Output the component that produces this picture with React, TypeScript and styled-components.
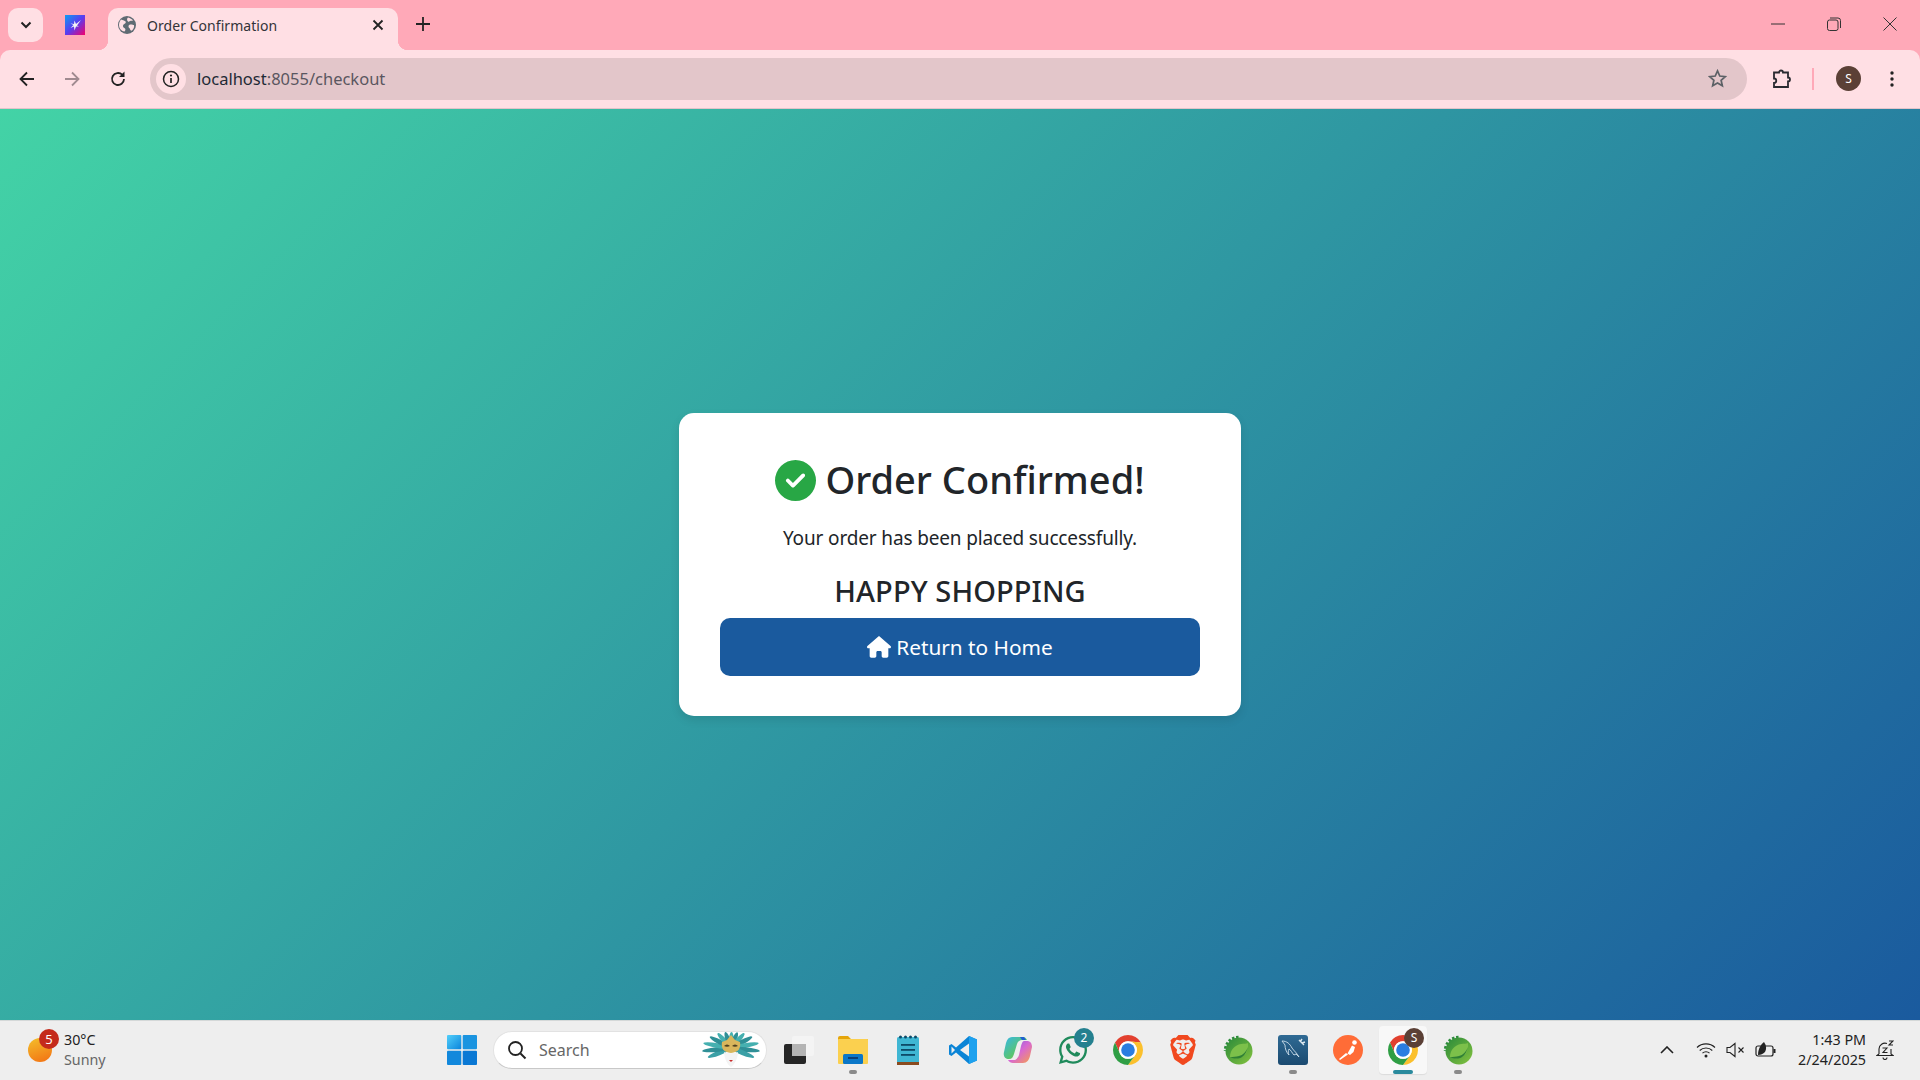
import React from 'react';
import styled, { createGlobalStyle } from 'styled-components';
import { FaWhatsapp } from 'react-icons/fa';
import { FaCircleCheck, FaHouse } from 'react-icons/fa6';
import { SiBrave } from 'react-icons/si';

const GlobalStyle = createGlobalStyle`
  * { box-sizing: border-box; }
  html, body { margin: 0; padding: 0; height: 100%; overflow: hidden; }
  body { font-family: "Noto Sans", "Liberation Sans", sans-serif; color: #212529; }
`;

const ChromeIcon = () => (
  <svg width="30" height="30" viewBox="2 2 44 44">
    <path d="M24 11L43.05 13A22 22 0 0 0 4.95 13L12.74 30.5A13 13 0 0 1 24 11z" fill="#e2402f" />
    <path d="M35.26 30.5L24 46A22 22 0 0 0 43.05 13L24 11A13 13 0 0 1 35.26 30.5z" fill="#fbc02d" />
    <path d="M12.74 30.5L4.95 13A22 22 0 0 0 24 46L35.26 30.5A13 13 0 0 1 12.74 30.5z" fill="#2f9e44" />
    <circle cx="24" cy="24" r="13" fill="#fff" />
    <circle cx="24" cy="24" r="10" fill="#2a7de1" />
  </svg>
);

// the two spring icons on the taskbar share one gradient id on purpose, both are identical
const SpringIcon = () => (
  <svg width="30" height="30" viewBox="0 0 30 30">
    <defs>
      <linearGradient id="springBody" x1="0" y1="0" x2="1" y2="1">
        <stop offset="0" stopColor="#2a8a3a" />
        <stop offset="0.55" stopColor="#5aa83c" />
        <stop offset="1" stopColor="#86c440" />
      </linearGradient>
    </defs>
    <path d="M15.5 2.5A13 13 0 0 0 2.5 16" fill="none" stroke="#2a8a3a" strokeWidth="3.4" strokeDasharray="2.4 1.6" />
    <circle cx="16" cy="16" r="13.5" fill="url(#springBody)" />
    <path d="M25 8c1 8-3 14-10 15-3 .5-6 0-8-1 0-7 5-12 11-13 3-.3 5 0 7-1z" fill="#7cc04a" />
    <path d="M7 22c4 2 9 2 12 0 3-2 5-6 6-10-2 5-5 8-9 9-3 .8-6 1-9 1z" fill="#2f7f35" />
  </svg>
);

const VscodeIcon = () => (
  <svg width="30" height="30" viewBox="0 0 30 30">
    <path d="M21 1l8 3.500v21L21 29 8 17.500l-4.500 3.500L1 19.500v-9L3.500 9 8 12.500z" fill="#0a84d6" />
    <path d="M21 1l8 3.500v21L21 29z" fill="#1ea1ee" />
    <path d="M21 8.500L12 15l9 6.500z" fill="#eeeeee" />
    <path d="M3.500 11.500L7 15l-3.500 3.500z" fill="#eeeeee" />
  </svg>
);

const ExplorerIcon = () => (
  <svg width="32" height="30" viewBox="0 0 32 30">
    <path d="M1 3a2 2 0 0 1 2-2h8l3 3h16a1 1 0 0 1 1 1v4H1z" fill="#e5a50a" />
    <rect x="1" y="4" width="30" height="25" rx="1" fill="#fbd04f" />
    <rect x="6" y="19" width="20" height="10" rx="1.5" fill="#0b77c8" />
    <rect x="11" y="22" width="10" height="2" fill="#0a3f78" />
  </svg>
);

const NotepadIcon = () => (
  <svg width="24" height="30" viewBox="0 0 24 30">
    <rect x="1" y="2" width="22" height="26" rx="1.5" fill="#3fb6d3" />
    <rect x="1" y="27" width="22" height="3" fill="#8a4b1f" />
    <g fill="#0d4a68">
      <circle cx="4.5" cy="2" r="1.5" />
      <circle cx="9.5" cy="2" r="1.5" />
      <circle cx="14.5" cy="2" r="1.5" />
      <circle cx="19.5" cy="2" r="1.5" />
      <rect x="5" y="9" width="14" height="1.8" />
      <rect x="5" y="14" width="14" height="1.8" />
      <rect x="5" y="19" width="14" height="1.8" />
    </g>
  </svg>
);

const TaskViewIcon = () => (
  <svg width="32" height="30" viewBox="0 0 32 30">
    <rect x="1" y="9" width="22" height="20" rx="2" fill="#262626" />
    <rect x="9" y="1" width="22" height="20" rx="2" fill="#f4f4f4" />
    <rect x="9" y="9" width="14" height="12" fill="#b4b4b4" />
  </svg>
);

const CopilotIcon = () => (
  <svg width="30" height="30" viewBox="0 0 30 30">
    <defs>
      <linearGradient id="copA" x1="0" y1="0" x2="1" y2="1">
        <stop offset="0" stopColor="#35b8e8" />
        <stop offset="0.6" stopColor="#5ac46e" />
        <stop offset="1" stopColor="#f7c531" />
      </linearGradient>
      <linearGradient id="copB" x1="0" y1="0" x2="1" y2="1">
        <stop offset="0" stopColor="#7a5ce8" />
        <stop offset="0.5" stopColor="#d868d0" />
        <stop offset="1" stopColor="#f7a04a" />
      </linearGradient>
    </defs>
    <path d="M9 2h11c2 0 3 1 4 3h-5c-2 0-4 1-5 4l-3 10c-1 3-2 5-5 5-4 0-6-3-5-7l2-9C4 4 6 2 9 2z" fill="url(#copA)" />
    <path d="M21 6h3c3 0 5 2 5 6l-2 9c-1 4-3 7-7 7H10c-2 0-4-1-5-3h6c2 0 4-2 5-5l2-9c.5-2 1.500-5 3-5z" fill="url(#copB)" />
    <path d="M17 2h4l2 3h-4z" fill="#1f5fd0" />
  </svg>
);

const MysqlIcon = () => (
  <svg width="30" height="30" viewBox="0 0 30 30">
    <defs>
      <linearGradient id="sqlBg" x1="0" y1="0" x2="0" y2="1">
        <stop offset="0" stopColor="#2f6a94" />
        <stop offset="1" stopColor="#1b4a70" />
      </linearGradient>
    </defs>
    <rect width="30" height="30" rx="3" fill="url(#sqlBg)" />
    <path d="M4 6c5 0 8 3 10 7 2 3 5 5 7 9l-3-3-2 1c-2-2-3-5-5-6-1 2-1 4 0 6-3-3-4-7-4-10-1-1-2-3-3-4z" fill="none" stroke="#cfe0ec" strokeWidth="0.9" />
    <path d="M21 5l5 5M24 4l-2 3M27 7l-3 1" stroke="#dce8f0" strokeWidth="1.4" fill="none" />
  </svg>
);

const PostmanIcon = () => (
  <svg width="30" height="30" viewBox="0 0 30 30">
    <circle cx="15" cy="15" r="15" fill="#ff6c37" />
    <circle cx="21.5" cy="7.5" r="2.3" fill="#fff" />
    <path d="M19 10.500l3 1.500-1.500 5-3.500 3-2.500-1.500zM13 18l2 1.500-8 5.500-1-1z" fill="#fff" />
  </svg>
);

const plumes = [
  { angle: -112, length: 25, fill: '#3aa0a6' },
  { angle: -96, length: 29, fill: '#2f8f96' },
  { angle: -80, length: 28, fill: '#45b0b0' },
  { angle: -62, length: 24, fill: '#2f8f96' },
  { angle: -42, length: 20, fill: '#45b0b0' },
  { angle: -20, length: 17, fill: '#2f8f96' },
  { angle: 2, length: 16, fill: '#45b0b0' },
  { angle: 22, length: 17, fill: '#2f8f96' },
  { angle: 42, length: 20, fill: '#45b0b0' },
  { angle: 62, length: 24, fill: '#2f8f96' },
  { angle: 80, length: 28, fill: '#45b0b0' },
  { angle: 96, length: 29, fill: '#2f8f96' },
  { angle: 112, length: 25, fill: '#3aa0a6' },
];

const MaskIcon = () => (
  <svg width="60" height="38" viewBox="0 0 60 38">
    {plumes.map((p) => (
      <ellipse
        key={p.angle}
        cx="30"
        cy={17 - p.length / 2}
        rx="2.4"
        ry={p.length / 2}
        fill={p.fill}
        transform={`rotate(${p.angle} 30 17)`}
      />
    ))}
    <path d="M21 11l5-2 4-5 4 5 5 2c1 6-1 10-9 11-8-1-10-5-9-11z" fill="#d9b65c" />
    <path d="M23 15c2-2 4-2 6 0-2 1-4 1-6 0zM31 15c2-2 4-2 6 0-2 1-4 1-6 0z" fill="#4e4020" />
    <path d="M23 21c3 1.500 11 1.500 14 0-.5 7-3 12-7 15-4-3-6.500-8-7-15z" fill="#f4f4f4" />
    <path d="M28 29h4l-2 2z" fill="#c92a2a" />
  </svg>
);

const GlobeIcon = () => (
  <svg width="18" height="18" viewBox="0 0 18 18">
    <circle cx="9" cy="9" r="9" fill="#5f6b73" />
    <path d="M3 3.500c2 .5 3 1 4 1.500s1 2 0 2.500-2 1-2 2.500 1 1.500 2 2.500 0 2.500-.5 3C3 15 1 12 1 9c0-2 .8-4 2-5.500zM10 1.500c2 .5 4 1.500 5 3-1 .5-2 0-3 .5s-1 1-2 .5-1.500-3 0-4zM16 9c.5 2-.5 4-2 5.500-1 .5-2-.5-2-1.500s-1.500-1-1.500-2.500 1-2 2.500-2 2 .5 3 .5z" fill="#ffdfe4" />
  </svg>
);

const PinnedIcon = () => (
  <svg width="20" height="20" viewBox="0 0 20 20">
    <defs>
      <linearGradient id="pin" x1="0" y1="0" x2="1" y2="1">
        <stop offset="0" stopColor="#0d9df2" />
        <stop offset="0.5" stopColor="#5a3cf0" />
        <stop offset="1" stopColor="#f5006a" />
      </linearGradient>
    </defs>
    <rect width="20" height="20" fill="url(#pin)" />
    <path d="M11 9l5-4-4 5.500 2 1-3 0-1.500 4-.5-4-3.500 1.500 3-3-3-1.500 3.500.5.500-3.500z" fill="#f4f4f4" />
  </svg>
);

const Page = styled.div`
  width: 1920px;
  height: 1080px;
  display: flex;
  flex-direction: column;
  overflow: hidden;
  background: #ffa9b8;
`;

const TabStrip = styled.div`
  height: 50px;
  flex: none;
  display: flex;
  align-items: flex-end;
  padding: 0 2px 0 8px;
`;

const TabSearch = styled.button`
  width: 35px;
  height: 34px;
  margin-bottom: 8px;
  padding: 0;
  border: 0;
  border-radius: 10px;
  background: #ffdfe4;
  display: flex;
  align-items: center;
  justify-content: center;
`;

const PinnedTab = styled.div`
  width: 65px;
  height: 42px;
  display: flex;
  align-items: flex-start;
  justify-content: center;
  padding: 7px 2px 0 0;
`;

const ActiveTab = styled.div`
  position: relative;
  width: 290px;
  height: 42px;
  background: #ffdfe4;
  border-radius: 10px 10px 0 0;
  display: flex;
  align-items: center;
  padding: 0 14px 8px 10px;
  font-size: 14px;
  color: #333338;
  &::before,
  &::after {
    content: '';
    position: absolute;
    bottom: 0;
    width: 10px;
    height: 10px;
  }
  &::before {
    left: -10px;
    background: radial-gradient(circle at 0 0, transparent 10px, #ffdfe4 10.5px);
  }
  &::after {
    right: -10px;
    background: radial-gradient(circle at 100% 0, transparent 10px, #ffdfe4 10.5px);
  }
`;

const TabTitle = styled.span`
  flex: 1;
  margin-left: 11px;
  letter-spacing: 0.05px;
`;

const NewTab = styled.div`
  margin-left: 18px;
  height: 42px;
  padding-top: 6px;
`;

const WindowControls = styled.div`
  margin-left: auto;
  align-self: flex-start;
  display: flex;
`;

const WindowButton = styled.div`
  width: 56px;
  height: 48px;
  display: flex;
  align-items: center;
  justify-content: center;
`;

const Toolbar = styled.div`
  height: 59px;
  flex: none;
  background: #ffdfe4;
  border-radius: 10px 10px 0 0;
  border-bottom: 1px solid #e3c4ca;
  display: flex;
  align-items: center;
  padding-bottom: 1px;
`;

const NavButton = styled.div<{ $width: number }>`
  width: ${({ $width }) => $width}px;
  display: flex;
  justify-content: center;
  flex: none;
`;

const Omnibox = styled.div`
  flex: none;
  width: 1597px;
  margin-left: 5px;
  height: 42px;
  border-radius: 21px;
  background: #e3c6ca;
  display: flex;
  align-items: center;
  padding: 0 20px 0 6px;
  font-size: 16.5px;
`;

const InfoBadge = styled.div`
  width: 30px;
  height: 30px;
  border-radius: 50%;
  background: #ffdfe4;
  display: flex;
  align-items: center;
  justify-content: center;
`;

const Url = styled.span`
  flex: 1;
  margin-left: 11px;
  color: #5a5660;
`;

const UrlHost = styled.span`
  color: #1e2a35;
`;

const ExtensionButton = styled(NavButton)`
  margin-left: 15px;
`;

const Divider = styled.div`
  width: 2px;
  height: 22px;
  background: #ffa9b8;
  margin-left: 10px;
`;

const Avatar = styled.div`
  width: 25px;
  height: 25px;
  border-radius: 50%;
  background: #5b4036;
  color: #fff;
  font-size: 12px;
  display: flex;
  align-items: center;
  justify-content: center;
  margin: 0 14px 0 22px;
`;

const Content = styled.main`
  flex: 1;
  min-height: 0;
  background: linear-gradient(135deg, #43d3a6, #1a5a9e);
  display: flex;
  align-items: center;
  justify-content: center;
`;

const Card = styled.section`
  width: 562px;
  padding: 42px 41px 40px;
  background: #fff;
  border-radius: 15px;
  box-shadow: 0 4px 10px rgba(0, 0, 0, 0.1);
  text-align: center;
`;

const Heading = styled.h1`
  margin: 0 0 20px;
  font-size: 38px;
  line-height: 48px;
  font-weight: 500;
  white-space: nowrap;
  svg {
    color: #28a745;
    font-size: 41px;
    vertical-align: -7px;
    margin-right: 9px;
  }
`;

const Lead = styled.p`
  margin: 0 0 21px;
  font-size: 19px;
  line-height: 30px;
  letter-spacing: -0.15px;
`;

const Farewell = styled.h3`
  margin: 0 0 10px;
  font-size: 29px;
  line-height: 34px;
  font-weight: 500;
  letter-spacing: 0.1px;
`;

const HomeButton = styled.a`
  display: flex;
  align-items: center;
  justify-content: center;
  gap: 5px;
  height: 58px;
  border-radius: 10px;
  background: #1a5a9e;
  color: #fff;
  font-size: 20.8px;
  svg {
    font-size: 24px;
  }
`;

const Taskbar = styled.footer`
  height: 60px;
  flex: none;
  background: #eeeeee;
  border-top: 1px solid #d4d8d8;
  padding-bottom: 1px;
  display: grid;
  grid-template-columns: 434px auto 1fr;
  align-items: center;
`;

const Weather = styled.div`
  display: flex;
  align-items: center;
  padding-left: 28px;
  gap: 12px;
`;

const SunWrap = styled.div`
  position: relative;
  width: 24px;
  height: 24px;
  border-radius: 50%;
  background: linear-gradient(160deg, #f3c02c, #f36f12);
`;

const AlertBadge = styled.span`
  position: absolute;
  top: -9px;
  left: 11px;
  width: 20px;
  height: 20px;
  border-radius: 50%;
  background: #c42b1c;
  color: #fff;
  font-size: 13px;
  line-height: 20px;
  text-align: center;
`;

const WeatherText = styled.div`
  font-size: 14.3px;
  line-height: 20px;
  color: #222;
`;

const Muted = styled.div`
  color: #666;
`;

const TaskIcons = styled.div`
  display: flex;
  align-items: center;
`;

const StartSlot = styled.div`
  width: 55px;
  margin-right: 4px;
  display: flex;
  justify-content: center;
`;

const SearchBox = styled.div`
  width: 274px;
  height: 38px;
  border-radius: 19px;
  background: #fff;
  border: 1px solid #e2e2e2;
  border-bottom-color: #c8c8c8;
  display: flex;
  align-items: center;
  padding: 0 5px 0 13px;
  font-size: 16px;
  color: #666;
  margin-right: 3px;
`;

const SearchLabel = styled.span`
  flex: 1;
  margin-left: 12px;
`;

const Slot = styled.div<{ $active?: boolean }>`
  position: relative;
  width: 55px;
  height: 48px;
  display: flex;
  align-items: center;
  justify-content: center;
  &::before {
    content: '';
    display: ${({ $active }) => ($active ? 'block' : 'none')};
    position: absolute;
    left: 4px;
    right: 3px;
    top: 0;
    bottom: 0;
    border-radius: 4px;
    background: #f8f8f8;
    box-shadow: 0 1px 1px rgba(0, 0, 0, 0.08);
  }
  & > * {
    position: relative;
  }
`;

const TaskViewSlot = styled(Slot)`
  padding-left: 3px;
`;

const Running = styled.span<{ $active?: boolean }>`
  position: absolute !important;
  bottom: 0;
  left: 50%;
  transform: translateX(-50%);
  width: ${({ $active }) => ($active ? 20 : 8)}px;
  height: 4px;
  border-radius: 2px;
  background: ${({ $active }) => ($active ? '#2a8a9d' : '#8a8a8a')};
`;

const CountBadge = styled.span<{ $dark?: boolean }>`
  position: absolute !important;
  top: 2px;
  right: 6px;
  width: 20px;
  height: 20px;
  border-radius: 50%;
  background: ${({ $dark }) => ($dark ? '#5b4036' : '#24808f')};
  color: #fff;
  font-size: 12px;
  line-height: 20px;
  text-align: center;
`;

const Tray = styled.div`
  display: flex;
  align-items: center;
  justify-content: flex-end;
  padding-right: 26px;
`;

const TrayIcon = styled.div<{ $width: number }>`
  width: ${({ $width }) => $width}px;
  display: flex;
  justify-content: center;
`;

const Clock = styled.div`
  font-size: 14.3px;
  line-height: 20px;
  text-align: right;
  color: #222;
  margin: 0 10px 0 17px;
`;

const WinStart = () => (
  <svg width="30" height="30" viewBox="0 0 30 30">
    <defs>
      <linearGradient id="winA" x1="0" y1="0" x2="1" y2="1">
        <stop offset="0" stopColor="#52cffa" />
        <stop offset="1" stopColor="#0a84dc" />
      </linearGradient>
    </defs>
    <rect x="0" y="0" width="14.3" height="14.3" rx="1" fill="url(#winA)" />
    <rect x="15.7" y="0" width="14.3" height="14.3" rx="1" fill="#1a94e0" />
    <rect x="0" y="15.7" width="14.3" height="14.3" rx="1" fill="#1288dc" />
    <rect x="15.7" y="15.7" width="14.3" height="14.3" rx="1" fill="#0a78d4" />
  </svg>
);

export default function App() {
  return (
    <>
      <GlobalStyle />
      <Page>
        <TabStrip>
          <TabSearch>
            <svg width="12" height="8" viewBox="0 0 12 8">
              <path d="M1.5 1.5L6 6l4.500-4.500" fill="none" stroke="#222" strokeWidth="2" />
            </svg>
          </TabSearch>
          <PinnedTab>
            <PinnedIcon />
          </PinnedTab>
          <ActiveTab>
            <GlobeIcon />
            <TabTitle>Order Confirmation</TabTitle>
            <svg width="12" height="12" viewBox="0 0 12 12">
              <path d="M1.5 1.5l9 9M10.5 1.5l-9 9" stroke="#222" strokeWidth="1.8" />
            </svg>
          </ActiveTab>
          <NewTab>
            <svg width="14" height="14" viewBox="0 0 14 14">
              <path d="M7 0v14M0 7h14" stroke="#222" strokeWidth="1.8" />
            </svg>
          </NewTab>
          <WindowControls>
            <WindowButton>
              <svg width="14" height="2" viewBox="0 0 14 2">
                <path d="M0 1h14" stroke="#333" strokeWidth="1" />
              </svg>
            </WindowButton>
            <WindowButton>
              <svg width="14" height="14" viewBox="0 0 14 14">
                <rect x="0.5" y="3" width="10.5" height="10.5" rx="2" fill="none" stroke="#333" />
                <path d="M3 1h8a2.500 2.500 0 0 1 2.500 2.500V11" fill="none" stroke="#333" />
              </svg>
            </WindowButton>
            <WindowButton>
              <svg width="14" height="14" viewBox="0 0 14 14">
                <path d="M0.5 0.5l13 13M13.5 0.5l-13 13" stroke="#333" />
              </svg>
            </WindowButton>
          </WindowControls>
        </TabStrip>

        <Toolbar>
          <NavButton $width={54}>
            <svg width="16" height="16" viewBox="0 0 16 16">
              <path d="M15 8H2M8 1.500L1.500 8 8 14.500" fill="none" stroke="#222" strokeWidth="1.8" />
            </svg>
          </NavButton>
          <NavButton $width={36}>
            <svg width="16" height="16" viewBox="0 0 16 16">
              <path d="M1 8h13M8 1.500L14.500 8 8 14.500" fill="none" stroke="#a08a90" strokeWidth="1.8" />
            </svg>
          </NavButton>
          <NavButton $width={55}>
            <svg width="16" height="16" viewBox="0 0 16 16">
              <path d="M14 8a6 6 0 1 1-1.800-4.300" fill="none" stroke="#222" strokeWidth="1.8" />
              <path d="M14.5 0.5v5.500H9z" fill="#222" />
            </svg>
          </NavButton>
          <Omnibox>
            <InfoBadge>
              <svg width="18" height="18" viewBox="0 0 18 18">
                <circle cx="9" cy="9" r="7.5" fill="none" stroke="#222" strokeWidth="1.5" />
                <path d="M9 8v5" stroke="#222" strokeWidth="1.7" />
                <circle cx="9" cy="5.5" r="1.1" fill="#222" />
              </svg>
            </InfoBadge>
            <Url>
              <UrlHost>localhost</UrlHost>:8055/checkout
            </Url>
            <svg width="19" height="19" viewBox="0 0 20 20">
              <path
                d="M10 2l2.400 5.400 5.800.6-4.400 3.900 1.300 5.700L10 14.700l-5.100 2.900 1.300-5.700L1.800 8l5.800-.6z"
                fill="none"
                stroke="#5c6166"
                strokeWidth="1.8"
              />
            </svg>
          </Omnibox>
          <ExtensionButton $width={40}>
            <svg width="20" height="20" viewBox="0 0 20 20">
              <path
                d="M7 3.500a2 2 0 0 1 4 0h5v5a2 2 0 0 1 0 4v5.500H2v-4a2.200 2.200 0 0 0 0-4.500V3.500z"
                fill="none"
                stroke="#2a2a30"
                strokeWidth="1.8"
              />
            </svg>
          </ExtensionButton>
          <Divider />
          <Avatar>S</Avatar>
          <NavButton $width={34}>
            <svg width="4" height="16" viewBox="0 0 4 16">
              <circle cx="2" cy="2" r="1.7" fill="#222" />
              <circle cx="2" cy="8" r="1.7" fill="#222" />
              <circle cx="2" cy="14" r="1.7" fill="#222" />
            </svg>
          </NavButton>
        </Toolbar>

        <Content>
          <Card>
            <Heading>
              <FaCircleCheck />
              Order Confirmed!
            </Heading>
            <Lead>Your order has been placed successfully.</Lead>
            <Farewell>HAPPY SHOPPING</Farewell>
            <HomeButton>
              <FaHouse />
              Return to Home
            </HomeButton>
          </Card>
        </Content>

        <Taskbar>
          <Weather>
            <SunWrap>
              <AlertBadge>5</AlertBadge>
            </SunWrap>
            <WeatherText>
              30°C
              <Muted>Sunny</Muted>
            </WeatherText>
          </Weather>
          <TaskIcons>
            <StartSlot>
              <WinStart />
            </StartSlot>
            <SearchBox>
              <svg width="20" height="20" viewBox="0 0 20 20">
                <circle cx="8.5" cy="8.5" r="6.5" fill="none" stroke="#222" strokeWidth="1.8" />
                <path d="M13.5 13.5L18.5 18.5" stroke="#222" strokeWidth="2" />
              </svg>
              <SearchLabel>Search</SearchLabel>
              <MaskIcon />
            </SearchBox>
            <TaskViewSlot><TaskViewIcon /></TaskViewSlot>
            <Slot><ExplorerIcon /><Running /></Slot>
            <Slot><NotepadIcon /></Slot>
            <Slot><VscodeIcon /></Slot>
            <Slot><CopilotIcon /></Slot>
            <Slot>
              <FaWhatsapp size={32} color="#1f8a5b" />
              <CountBadge>2</CountBadge>
            </Slot>
            <Slot><ChromeIcon /></Slot>
            <Slot><SiBrave size={30} color="#f1491f" /></Slot>
            <Slot><SpringIcon /></Slot>
            <Slot><MysqlIcon /><Running /></Slot>
            <Slot><PostmanIcon /></Slot>
            <Slot $active>
              <ChromeIcon />
              <CountBadge $dark>S</CountBadge>
              <Running $active />
            </Slot>
            <Slot><SpringIcon /><Running /></Slot>
          </TaskIcons>
          <Tray>
            <TrayIcon $width={48}>
              <svg width="14" height="8" viewBox="0 0 14 8">
                <path d="M1 7l6-6 6 6" fill="none" stroke="#222" strokeWidth="1.6" />
              </svg>
            </TrayIcon>
            <TrayIcon $width={30}>
              <svg width="20" height="16" viewBox="0 0 20 16">
                <path d="M1 5.500a13 13 0 0 1 18 0M3.700 8.500a9 9 0 0 1 12.600 0M6.500 11.200a5 5 0 0 1 7 0" fill="none" stroke="#222" strokeWidth="1.1" />
                <circle cx="10" cy="14" r="1.5" fill="#222" />
              </svg>
            </TrayIcon>
            <TrayIcon $width={30}>
              <svg width="20" height="16" viewBox="0 0 20 16">
                <path d="M1 5.500h3L9 1.500v13L4 10.500H1z" fill="none" stroke="#222" strokeWidth="1.1" />
                <path d="M12.500 5.500l5 5M17.500 5.500l-5 5" stroke="#222" strokeWidth="1.1" />
              </svg>
            </TrayIcon>
            <TrayIcon $width={30}>
              <svg width="22" height="18" viewBox="0 0 22 18">
                <rect x="1" y="5" width="17" height="10" rx="2" fill="none" stroke="#222" strokeWidth="1.2" />
                <rect x="18.5" y="8" width="2" height="4" fill="#222" />
                <path d="M3 14c0-6 3-11 6-13 2 3 3 6 1 10-2 2-4 3-7 3z" fill="#222" />
              </svg>
            </TrayIcon>
            <Clock>
              1:43 PM
              <div>2/24/2025</div>
            </Clock>
            <svg width="18" height="20" viewBox="0 0 18 20">
              <path d="M3 14V9a6 6 0 0 1 8-5.500M15 9v5l2 1.500H1L3 14M7 17.500a2 2 0 0 0 4 0" fill="none" stroke="#222" strokeWidth="1.1" />
              <path d="M6.500 8H11L7 12.500h4.500M13 1h4l-4 4h4" fill="none" stroke="#222" strokeWidth="1.1" />
            </svg>
          </Tray>
        </Taskbar>
      </Page>
    </>
  );
}
